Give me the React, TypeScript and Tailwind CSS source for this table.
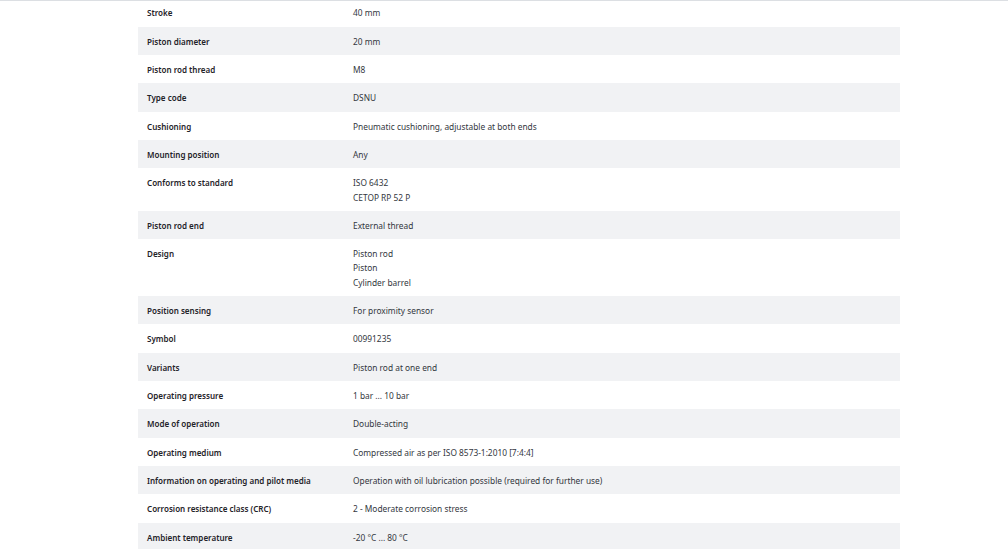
import React from "react";

const rows: [string, string[]][] = [
  ["Stroke", ["40 mm"]],
  ["Piston diameter", ["20 mm"]],
  ["Piston rod thread", ["M8"]],
  ["Type code", ["DSNU"]],
  ["Cushioning", ["Pneumatic cushioning, adjustable at both ends"]],
  ["Mounting position", ["Any"]],
  ["Conforms to standard", ["ISO 6432", "CETOP RP 52 P"]],
  ["Piston rod end", ["External thread"]],
  ["Design", ["Piston rod", "Piston", "Cylinder barrel"]],
  ["Position sensing", ["For proximity sensor"]],
  ["Symbol", ["00991235"]],
  ["Variants", ["Piston rod at one end"]],
  ["Operating pressure", ["1 bar ... 10 bar"]],
  ["Mode of operation", ["Double-acting"]],
  ["Operating medium", ["Compressed air as per ISO 8573-1:2010 [7:4:4]"]],
  ["Information on operating and pilot media", ["Operation with oil lubrication possible (required for further use)"]],
  ["Corrosion resistance class (CRC)", ["2 - Moderate corrosion stress"]],
  ["Ambient temperature", ["-20 °C ... 80 °C"]],
];

export default function App() {
  return (
    <div className="h-[549px] w-full overflow-hidden bg-white" style={{ fontFamily: '"Noto Sans", "Open Sans", sans-serif' }}>
      <div className="h-px w-full bg-[#dcdfe3]" />
      <div className="overflow-hidden pl-[138px]">
        <div className="mt-[-2.6px] w-[762px]">
          {rows.map(([label, values], i) => (
            <div key={label} className={`flex ${i % 2 === 1 ? "bg-[#f1f2f4]" : "bg-white"}`}>
              <div className="w-[206px] shrink-0 px-[9px] pt-[8.08px] pb-[6.08px] text-[8.05px] leading-[14.17px] font-semibold text-[#1f2329]">
                {label}
              </div>
              <div className="flex-1 px-[9px] pt-[8.08px] pb-[6.08px] text-[8.35px] leading-[14.17px] text-[#333740]">
                {values.map((v) => (
                  <div key={v}>{v}</div>
                ))}
              </div>
            </div>
          ))}
        </div>
      </div>
    </div>
  );
}
